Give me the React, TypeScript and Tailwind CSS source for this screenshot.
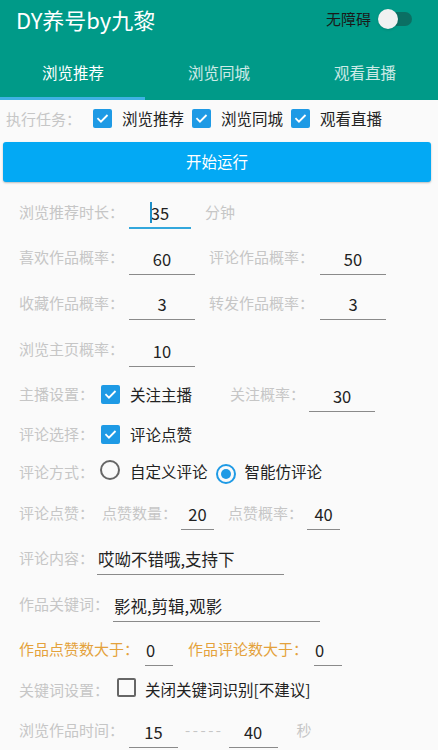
import React from "react";

const F = { fontFamily: '"Noto Sans CJK SC", "Noto Sans", sans-serif' };

function Check({ on = true }: { on?: boolean }) {
  return on ? (
    <span className="inline-flex w-[19px] h-[19px] rounded-[2px] bg-[#1e9ae5] items-center justify-center shrink-0">
      <svg width="15" height="15" viewBox="0 0 24 24" fill="none" stroke="white" strokeWidth="3" strokeLinecap="square">
        <path d="M5 12.5l4.5 4.5L19 7.5" />
      </svg>
    </span>
  ) : (
    <span className="inline-block w-[19px] h-[19px] rounded-[2px] border-2 border-[#666] shrink-0" />
  );
}

function Radio({ on }: { on?: boolean }) {
  return on ? (
    <span className="inline-flex w-[20px] h-[20px] rounded-full border-2 border-[#1e9ae5] items-center justify-center shrink-0">
      <span className="w-[10px] h-[10px] rounded-full bg-[#1e9ae5]" />
    </span>
  ) : (
    <span className="inline-block w-[20px] h-[20px] rounded-full border-2 border-[#666] shrink-0" />
  );
}

function Input({ w, v, ml, focus, align = "center" }: { w: number; v: string; ml: number; focus?: boolean; align?: string }) {
  return (
    <div
      className={`h-[30px] mt-[4px] flex items-center text-[16.5px] text-[#222] shrink-0 ${focus ? "border-b-2 border-[#33a7dc]" : "border-b border-[#8a8a8a]"} ${align === "left" ? "justify-start pl-[1px]" : "justify-center"}`}
      style={{ width: w, marginLeft: ml }}
    >
      {focus ? (
        <span className="relative">
          <span className="absolute left-[-1px] top-[1px] w-[2px] h-[21px] bg-[#1e8fc8]" />
          {v}
        </span>
      ) : (
        v
      )}
    </div>
  );
}

const L = ({ children, ml = 0, c = "text-[#c6c6c6]" }: { children: React.ReactNode; ml?: number; c?: string }) => (
  <span className={`text-[15px] ${c} whitespace-nowrap shrink-0`} style={{ marginLeft: ml }}>
    {children}
  </span>
);

const T = ({ children, ml = 0 }: { children: React.ReactNode; ml?: number }) => (
  <span className="text-[15.5px] text-[#222] whitespace-nowrap shrink-0" style={{ marginLeft: ml }}>
    {children}
  </span>
);

export default function App() {
  return (
    <div className="w-[438px] h-[750px] bg-[#fafafa] overflow-hidden" style={F}>
      <div className="bg-[#009a88] h-[100px] flex flex-col">
        <div className="h-[38px] flex items-center pl-[16px] pr-[26px]">
          <span className="text-white text-[22px] leading-none">DY养号by九黎</span>
          <span className="ml-auto text-[15px] text-[#1a1a1a]">无障碍</span>
          <div className="relative w-[34px] h-[20px] ml-[7px] flex items-center">
            <div className="absolute left-[5px] right-0 h-[14px] rounded-full bg-[#0b6f63]" />
            <div className="absolute left-0 w-[20px] h-[20px] rounded-full bg-[#f1f1f1] shadow" />
          </div>
        </div>
        <div className="flex-1 flex flex-col">
          <div className="flex-1 flex items-center text-[15.5px] pt-[10px]">
            <div className="w-[146px] text-center text-white">浏览推荐</div>
            <div className="w-[146px] text-center text-white/80">浏览同城</div>
            <div className="w-[146px] text-center text-white/80">观看直播</div>
          </div>
          <div className="h-[3px] w-[145px] bg-[#3fb2e4]" />
        </div>
      </div>

      <div className="h-[37px] flex items-center pl-[6px] pt-[1px]">
        <L>执行任务：</L>
        <span className="ml-[12px]"><Check /></span>
        <T ml={10}>浏览推荐</T>
        <span className="ml-[8px]"><Check /></span>
        <T ml={10}>浏览同城</T>
        <span className="ml-[8px]"><Check /></span>
        <T ml={10}>观看直播</T>
      </div>

      <div className="ml-[3px] mt-[5px] w-[428px] h-[40px] rounded-[3px] bg-[#03a9f4] shadow-[0_1px_2px_rgba(0,0,0,0.25)] flex items-center justify-center text-white text-[15.5px]">
        开始运行
      </div>

      <div className="pl-[19px] pt-[7px]">
        <div className="h-[46px] flex items-center">
          <L>浏览推荐时长：</L>
          <Input w={62} v="35" ml={5} focus />
          <L ml={14}>分钟</L>
        </div>
        <div className="h-[45px] flex items-center">
          <L>喜欢作品概率：</L>
          <Input w={66} v="60" ml={5} />
          <L ml={14}>评论作品概率：</L>
          <Input w={66} v="50" ml={6} />
        </div>
        <div className="h-[46px] flex items-center">
          <L>收藏作品概率：</L>
          <Input w={66} v="3" ml={5} />
          <L ml={14}>转发作品概率：</L>
          <Input w={66} v="3" ml={6} />
        </div>
        <div className="h-[47px] flex items-center">
          <L>浏览主页概率：</L>
          <Input w={66} v="10" ml={5} />
        </div>
        <div className="h-[43px] flex items-center">
          <L>主播设置：</L>
          <span className="ml-[7px]"><Check /></span>
          <T ml={10}>关注主播</T>
          <L ml={38}>关注概率：</L>
          <Input w={66} v="30" ml={4} />
        </div>
        <div className="h-[37px] flex items-center">
          <L>评论选择：</L>
          <span className="ml-[7px]"><Check /></span>
          <T ml={10}>评论点赞</T>
        </div>
        <div className="h-[38px] flex items-center">
          <L>评论方式：</L>
          <span className="ml-[6px]"><Radio /></span>
          <T ml={10}>自定义评论</T>
          <span className="ml-[8px]"><Radio on /></span>
          <T ml={9}>智能仿评论</T>
        </div>
        <div className="h-[44px] flex items-center">
          <L>评论点赞：</L>
          <L ml={8}>点赞数量：</L>
          <Input w={33} v="20" ml={4} />
          <L ml={14}>点赞概率：</L>
          <Input w={33} v="40" ml={4} />
        </div>
        <div className="h-[46px] flex items-center">
          <L>评论内容：</L>
          <Input w={187} v="哎呦不错哦,支持下" ml={3} align="left" />
        </div>
        <div className="h-[47px] flex items-center">
          <L>作品关键词：</L>
          <Input w={207} v="影视,剪辑,观影" ml={4} align="left" />
        </div>
        <div className="h-[42px] flex items-center">
          <L c="text-[#e4a23c]">作品点赞数大于：</L>
          <Input w={28} v="0" ml={6} align="left" />
          <L ml={15} c="text-[#e4a23c]">作品评论数大于：</L>
          <Input w={28} v="0" ml={6} align="left" />
        </div>
        <div className="h-[40px] flex items-center">
          <L>关键词设置：</L>
          <span className="ml-[8px]"><Check on={false} /></span>
          <T ml={9}>关闭关键词识别[不建议]</T>
        </div>
        <div className="h-[41px] flex items-center">
          <L>浏览作品时间：</L>
          <Input w={49} v="15" ml={5} />
          <span className="ml-[7px] text-[15px] text-[#c6c6c6] tracking-[2.5px] shrink-0 whitespace-nowrap">-----</span>
          <Input w={49} v="40" ml={5} />
          <L ml={19}>秒</L>
        </div>
      </div>
    </div>
  );
}
